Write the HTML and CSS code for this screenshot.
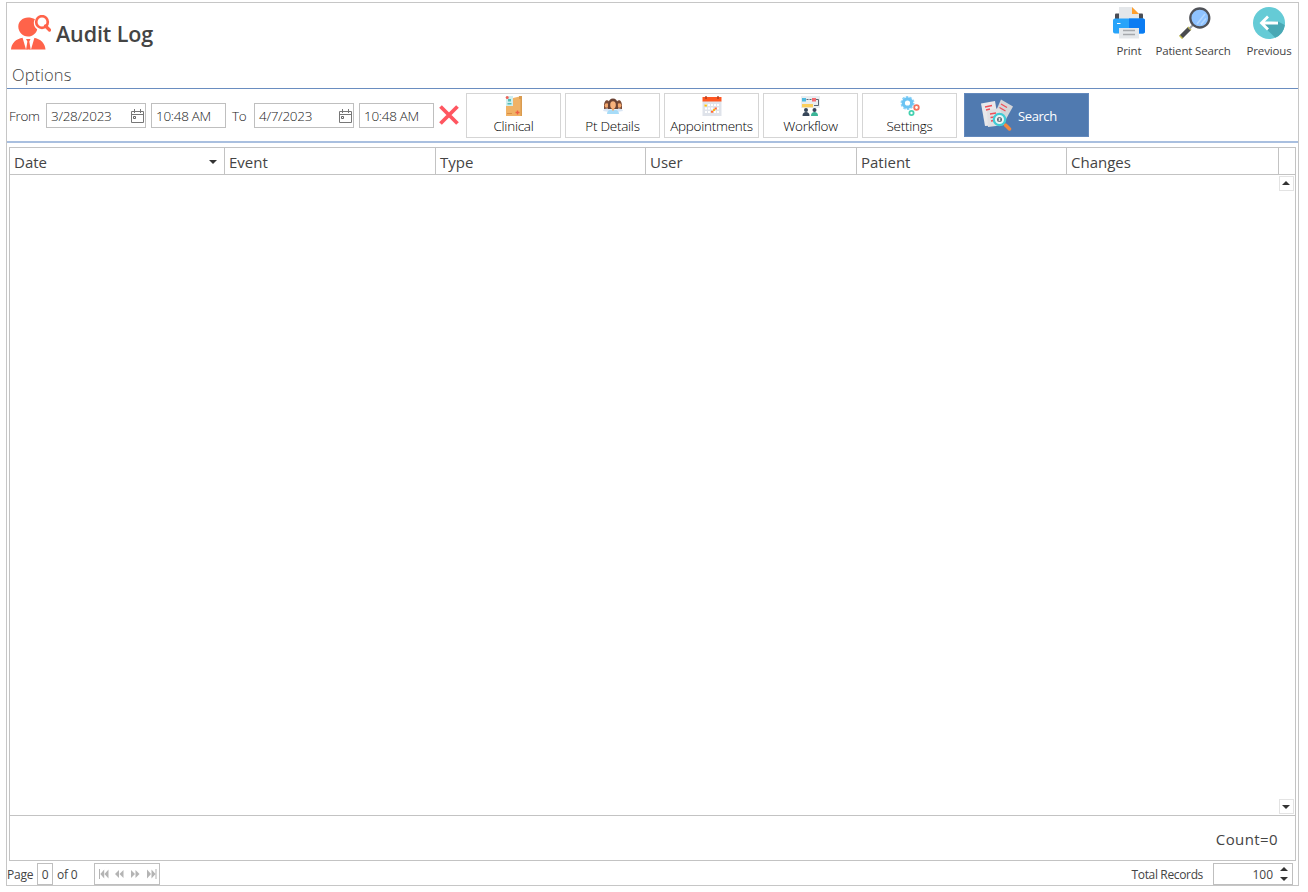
FILE: index.html
```html
<!DOCTYPE html>
<html lang="en">
<head>
  <meta charset="UTF-8">
  <title>Audit Log</title>
  <link rel="stylesheet" href="styles.css">
</head>
<body>

  <div class="window">
    <header class="header">
      <svg class="logo" viewBox="0 0 40 36" width="40" height="36">
        <path fill="#ff634a" d="M17 2.500c-5.500 0-9.700 4-9.700 9 0 5.400 4.200 10 9.700 10 4.700 0 8.500-3.500 9.200-7.300C22.500 12 22 6.500 24 4.300 22 3 19.500 2.500 17 2.500z"/>
        <path fill="#ff634a" d="M0 34.500c.5-6 4.500-10.800 12-11.800l5 11.800zM34.500 34.500c-.5-6-4.500-10.800-12-11.800l-4.500 11.800z"/>
        <path fill="#fff" d="M11.500 22.500L15 34.500h5l3.500-12z"/>
        <path fill="#ff634a" d="M15 24h4.500l-1.200 2.500 1.400 8h-4.600l1.300-8z"/>
        <circle cx="31" cy="7" r="5.800" fill="#fff" stroke="#ff634a" stroke-width="2.700"/>
        <path stroke="#ff634a" stroke-width="3.200" stroke-linecap="round" d="M34.500 11l4 4"/>
      </svg>
      <h1 class="title">Audit Log</h1>
      <nav class="actions">
        <a class="action print">
          <svg viewBox="0 0 32 32" width="32" height="32">
            <rect x="2" y="6.500" width="28" height="6" rx="1" fill="#4a4d55"/>
            <path fill="#e4e7ea" d="M6 0h13l7 6.500V15H6z"/>
            <path fill="#ff9f2c" d="M19 0l7 7h-7z"/>
            <path fill="#28a4fa" d="M2 11.500h28a2 2 0 0 1 2 2v11a2 2 0 0 1-2 2H2a2 2 0 0 1-2-2v-11a2 2 0 0 1 2-2z"/>
            <path fill="#0c7cf2" d="M16 11.500h14a2 2 0 0 1 2 2v11a2 2 0 0 1-2 2H16z"/>
            <path stroke="#fff" d="M4 16.500h3.500"/>
            <path fill="#e4e7ea" d="M6 21h20v10.500H6z"/>
            <path stroke="#a5a8ac" stroke-width="1.500" d="M10 23.500h12M10 27.500h12"/>
          </svg>
          <span>Print</span>
        </a>
        <a class="action patient">
          <svg viewBox="0 0 32 32" width="32" height="32">
            <path stroke="#4a4b4e" stroke-width="4.500" d="M2 30l8.500-8.500"/>
            <path stroke="#c9c04c" stroke-width="1.500" d="M9 20l3 3M.5 28.500l3 3"/>
            <path stroke="#9aa0a6" stroke-width="2" d="M10.500 21.500L14 18"/>
            <circle cx="20.800" cy="11" r="9.500" fill="#8fc3ff" stroke="#505258" stroke-width="2.300"/>
            <path stroke="#b3d7ff" stroke-width="1.600" d="M18 17l8-10M22 17.500l5-6"/>
          </svg>
          <span>Patient Search</span>
        </a>
        <a class="action previous">
          <svg viewBox="0 0 32 32" width="32" height="32">
            <circle cx="16" cy="16" r="16" fill="#65cbd6"/>
            <path fill="#49a8b4" d="M8 17l14.300 13.700A16 16 0 0 0 31.800 18L24 14z"/>
            <path fill="none" stroke="#fff" stroke-width="2.800" d="M25 16H9M15 9.500L8.500 16l6.500 6.500"/>
          </svg>
          <span>Previous</span>
        </a>
      </nav>
    </header>

    <div class="options">Options</div>

    <div class="filters">
      <span class="label from">From</span>
      <div class="field date"><span>3/28/2023</span>
        <svg class="cal" viewBox="0 0 13 14" width="13" height="14"><path stroke="#777" d="M.5 2.500h12v11H.5zM.5 5.500h12M3.500 0v4M9.500 0v4"/><path stroke="#666" d="M2.500 7.500h2v2h-2z"/></svg>
      </div>
      <div class="field time"><span>10:48 AM</span></div>
      <span class="label to">To</span>
      <div class="field date"><span>4/7/2023</span>
        <svg class="cal" viewBox="0 0 13 14" width="13" height="14"><path stroke="#777" d="M.5 2.500h12v11H.5zM.5 5.500h12M3.500 0v4M9.500 0v4"/><path stroke="#666" d="M2.500 7.500h2v2h-2z"/></svg>
      </div>
      <div class="field time"><span>10:48 AM</span></div>
      <svg class="clear" viewBox="0 0 20 20" width="20" height="20"><path stroke="#ff5660" stroke-width="3.800" d="M1.500 1.500l17 17M18.500 1.500l-17 17"/></svg>

      <div class="buttons">
        <button class="btn">
          <svg viewBox="0 0 20 20" width="20" height="20">
            <path fill="#f0b266" d="M9 2l9-2v20H2V9z"/>
            <path fill="#d99b50" d="M15 0h3v20h-1.500V3H15z"/>
            <path fill="#cfeef0" d="M2 0h7v10H2z"/>
            <circle cx="3.200" cy="1.500" r="1.500" fill="#f0645a"/>
            <path fill="#55bdb5" d="M4 3h3v2.500H4zM3.500 7h4v1.500h-4z"/>
            <path stroke="#ef5f45" stroke-width="1.400" d="M13.500 14.500v4M11.500 16.500h4"/>
            <path stroke="#d98f45" d="M3 17.500h5"/>
          </svg>
          Clinical
        </button>
        <button class="btn">
          <svg viewBox="0 0 20 20" width="20" height="20">
            <path fill="#7a4a35" d="M1 10c0-8 6-7 6-1v4H1zM19 10c0-8-6-7-6-1v4h6z"/>
            <circle cx="3.800" cy="9.500" r="2.200" fill="#f2a76e"/>
            <circle cx="16.200" cy="9.500" r="2.200" fill="#f2a76e"/>
            <path fill="#d9e6f5" d="M0 15c1-3 6-3 7-1l-1 2zM20 15c-1-3-6-3-7-1l1 2z"/>
            <path fill="#6b4233" d="M5 13c0-3-.5-10.500 5-10.500S15 10 15 13z"/>
            <ellipse cx="10" cy="9" rx="2.800" ry="3.700" fill="#f7b27c"/>
            <path fill="#f2a76e" d="M8.800 12h2.400v3H8.800z"/>
            <path fill="#a7dcf8" d="M4 18c0-3 2-4.500 4.500-4.500L10 15l1.500-1.500C14 13.500 16 15 16 18z"/>
          </svg>
          Pt Details
        </button>
        <button class="btn">
          <svg viewBox="0 0 20 20" width="20" height="20">
            <path fill="#dfe3ea" d="M.5 5h19v15H.5z"/>
            <path fill="#ff5722" d="M.5 1h19v4.500H.5z"/>
            <path stroke="#a83a20" stroke-width="1.300" d="M4 0v3M16 0v3"/>
            <path stroke="#fff" stroke-width="2" stroke-dasharray="2 1" d="M3 9h14M3 12.500h14M3 16h14"/>
            <path fill="#ffc107" d="M2.500 8.500h2.400v2H2.500zM11 13h2v2h-2z"/>
            <path fill="#ff6a35" d="M12.500 11.500h2.300v2h-2.300zM9 14.800h2.300v2H9z"/>
          </svg>
          Appointments
        </button>
        <button class="btn">
          <svg viewBox="0 0 20 20" width="20" height="20">
            <path fill="#e9edf0" d="M0 0h19v12H0z"/>
            <path fill="#4dbbe0" d="M1 2h4v3.500H1z"/>
            <path fill="#f46b70" d="M11 2h4v3.500h-4z"/>
            <path fill="#fccf5c" d="M1 8h11v3.300H1z"/>
            <path stroke="#5b6673" stroke-dasharray="2 1" d="M5.500 3.500h5"/>
            <path stroke="#5b6673" d="M15 3.500h2.500v6H13"/>
            <circle cx="5" cy="14" r="2" fill="#37475a"/>
            <path fill="#37475a" d="M1.500 20c0-3 1.500-4 3.500-4s3.500 1 3.500 4z"/>
            <circle cx="13.500" cy="14" r="2" fill="#37475a"/>
            <path fill="#3bb597" d="M10 20c0-3 1.500-4 3.500-4s3.500 1 3.500 4z"/>
          </svg>
          Workflow
        </button>
        <button class="btn">
          <svg viewBox="0 0 20 20" width="20" height="20">
            <circle cx="7.500" cy="7" r="6" stroke="#8fd3f7" stroke-width="2" stroke-dasharray="2.400 1.300"/>
            <circle cx="7.500" cy="7" r="4.200" fill="#fff" stroke="#6cc4f3" stroke-width="3.200"/>
            <circle cx="16.500" cy="11.500" r="2.300" fill="#fff" stroke="#f4735f" stroke-width="1.800"/>
            <circle cx="11.500" cy="17" r="2.100" fill="#fff" stroke="#45d1b0" stroke-width="1.800"/>
          </svg>
          Settings
        </button>
      </div>
      <button class="search">
        <svg viewBox="0 0 32 32" width="32" height="32">
          <path fill="#e8e8ea" d="M0 4.500L14 2l4 24-14 1z"/>
          <path fill="#d4d5d8" d="M20 .5l12 7-10 18-10-7z"/>
          <path fill="#dfe0e3" d="M6 11.500l13-2.500 4 17-16 2z"/>
          <path stroke="#ee4f59" stroke-width="1.300" d="M4 8l7-1.500M5 11l4-1M20 5l6 3.500M18.500 8.500l6 3.500M9 15l6-1M9.500 18.500l4-.5M10 22l3-.5"/>
          <path stroke="#f5893d" stroke-width="3.500" stroke-linecap="round" d="M24.500 26l4 4"/>
          <circle cx="18.500" cy="20.500" r="5.700" fill="#e8f6f6" stroke="#41cbd5" stroke-width="2.300"/>
          <circle cx="18.500" cy="20.500" r="2.500" fill="#5b6874"/>
          <path stroke="#fff" stroke-width=".8" d="M19.500 19.300H18v1.200h1v1.200h-1.500"/>
        </svg>
        <span>Search</span>
      </button>
    </div>

    <div class="grid">
      <div class="grid-head">
        <div class="col col-date"><span>Date</span><i class="arrow down"></i></div>
        <div class="col"><span>Event</span></div>
        <div class="col narrow"><span>Type</span></div>
        <div class="col"><span>User</span></div>
        <div class="col narrow"><span>Patient</span></div>
        <div class="col wide"><span>Changes</span></div>
      </div>
      <div class="grid-body">
        <div class="scrollbar">
          <div class="scroll-btn"><i class="arrow up"></i></div>
          <div class="scroll-btn"><i class="arrow down"></i></div>
        </div>
      </div>
      <div class="grid-foot"><span>Count=0</span></div>
    </div>

    <footer class="pager">
      <span class="page">Page</span>
      <span class="page-no">0</span>
      <span class="of">of 0</span>
      <div class="nav">
        <svg viewBox="0 0 64 20" width="64" height="20">
          <path fill="#b4b4b4" d="M4 5h1v10H4zM9.200 5.500v9L5.300 10zM13.500 5.500v9L9.500 10zM24 6v8L20 10zM28.500 6v8l-4-4zM36 6v8l4-4zM40.500 6v8l4-4zM52 5.500v9l4-4.500zM56.500 5.500v9l4-4.500zM60.500 5h1v10h-1z"/>
        </svg>
      </div>
      <span class="total">Total Records</span>
      <div class="spinner"><span>100</span>
        <div class="spin"><i class="arrow up"></i><i class="arrow down"></i></div>
      </div>
    </footer>
  </div>

</body>
</html>
```
FILE: styles.css
```css
* {
  box-sizing: border-box;
}

body {
  margin: 0;
  padding: 2px 0 0 6px;
  background: #fff;
  color: #444;
  font-family: 'Open Sans', 'Noto Sans', sans-serif;
}

svg {
  display: block;
  fill: none;
  flex: none;
}

.window {
  width: 1293px;
  height: 884px;
  border: 1px solid #c6c6c6;
  display: flex;
  flex-direction: column;
}

/* header */
.header {
  height: 60px;
  display: flex;
  padding-left: 4px;
}

.logo {
  margin-top: 12px;
}

.title {
  margin: 14px 0 0 5px;
  font-size: 21.5px;
  line-height: 34px;
  font-weight: 600;
  letter-spacing: -0.1px;
}

.actions {
  display: flex;
  margin: 4px 0 0 auto;
}

.action {
  display: flex;
  flex-direction: column;
  align-items: center;
  font-size: 11.5px;
  line-height: 16px;
  letter-spacing: -0.15px;
  gap: 4px;
  white-space: nowrap;
}

.print { width: 34px; }
.patient { width: 94px; }
.previous { width: 58px; }

.patient svg {
  margin-left: 3px;
}

.options {
  height: 26px;
  padding-left: 5px;
  font-size: 16.5px;
  font-weight: 300;
  line-height: 24px;
  letter-spacing: 0.1px;
  border-bottom: 1px solid #6a8dc0;
}

/* filter bar */
.filters {
  height: 54px;
  padding-left: 2px;
  display: flex;
  align-items: center;
  border-bottom: 2px solid #a9bfdf;
  font-size: 13.5px;
  font-weight: 300;
  letter-spacing: -0.3px;
  color: #222;
}

.label {
  padding-top: 2px;
}

.from { width: 37px; }
.to { width: 28px; padding-left: 6px; }

.field {
  height: 25px;
  margin-top: 1px;
  border: 1px solid #bfbfbf;
  padding: 0 2px 0 4px;
  display: flex;
  align-items: center;
  justify-content: space-between;
}

.field.date {
  padding-right: 1px;
}

.field span {
  padding-top: 1px;
}

.date { width: 100px; margin-right: 5px; }
.time { width: 75px; }

.clear {
  margin: 0 7px 0 5px;
}

.buttons {
  display: flex;
  gap: 4px;
}

.btn {
  width: 95px;
  height: 45px;
  padding: 2px 0 0;
  background: #fff;
  border: 1px solid #d5d5d5;
  display: flex;
  flex-direction: column;
  align-items: center;
  font: 300 13.5px/20px 'Open Sans', 'Noto Sans', sans-serif;
  letter-spacing: -0.25px;
  color: #000;
}

.search {
  width: 125px;
  height: 44px;
  margin: 0 0 1px 7px;
  padding: 0 0 0 16px;
  background: #507ab0;
  border: 1px solid #6389bd;
  display: flex;
  align-items: center;
  gap: 5px;
  font: 400 13px/20px 'Open Sans', 'Noto Sans', sans-serif;
  letter-spacing: -0.4px;
  color: #fff;
}

.search span {
  padding-top: 2px;
}

/* grid */
.grid {
  width: 1287px;
  height: 714px;
  margin: 4px 0 0 2px;
  border: 1px solid #c3c3c3;
  display: flex;
  flex-direction: column;
}

.grid-head {
  height: 27px;
  display: flex;
  border-bottom: 1px solid #c3c3c3;
  font-size: 15px;
  line-height: 28px;
}

.col {
  width: 211px;
  padding-left: 4px;
  border-right: 1px solid #c3c3c3;
}

.col-date {
  width: 215px;
  display: flex;
  justify-content: space-between;
  padding-right: 7px;
}

.col-date .arrow {
  margin-top: 12px;
}

.narrow { width: 210px; }
.wide { width: 212px; }

.arrow {
  width: 0;
  height: 0;
  border: 4px solid transparent;
}

.arrow.down {
  border-top-color: #333;
  border-bottom: 0;
}

.arrow.up {
  border-bottom-color: #333;
  border-top: 0;
}

.grid-body {
  flex: 1;
  display: flex;
  justify-content: flex-end;
}

.scrollbar {
  width: 16px;
  padding: 1px 1px 1px 0;
  display: flex;
  flex-direction: column;
  justify-content: space-between;
}

.scroll-btn {
  width: 15px;
  height: 15px;
  border: 1px solid #e3e3e3;
  display: flex;
  align-items: center;
  justify-content: center;
}

.scroll-btn .arrow {
  margin-right: 1px;
}

.scroll-btn .up {
  margin-bottom: 1px;
}

.grid-foot {
  height: 45px;
  border-top: 1px solid #c3c3c3;
  padding-right: 17px;
  text-align: right;
  font-size: 15px;
  line-height: 46px;
  letter-spacing: 0.4px;
}

/* pager */
.pager {
  flex: 1;
  display: flex;
  align-items: center;
  padding: 1px 5px 0 0;
  font-size: 12px;
  letter-spacing: -0.2px;
}

.page,
.of,
.total {
  padding-top: 1px;
}

.page { width: 30px; }

.page-no {
  width: 16px;
  height: 22px;
  border: 1px solid #bfbfbf;
  text-align: center;
  line-height: 22px;
}

.of {
  width: 41px;
  padding-left: 4px;
}

.nav {
  width: 66px;
  height: 22px;
  border: 1px solid #bfbfbf;
}

.total {
  margin-left: auto;
  letter-spacing: -0.35px;
}

.spinner {
  width: 80px;
  height: 22px;
  margin-left: 10px;
  padding-right: 4px;
  border: 1px solid #bfbfbf;
  display: flex;
  align-items: center;
  justify-content: flex-end;
  gap: 7px;
  letter-spacing: 0;
}

.spinner span {
  padding-top: 1px;
}

.spin {
  display: flex;
  flex-direction: column;
  gap: 6px;
}
```
